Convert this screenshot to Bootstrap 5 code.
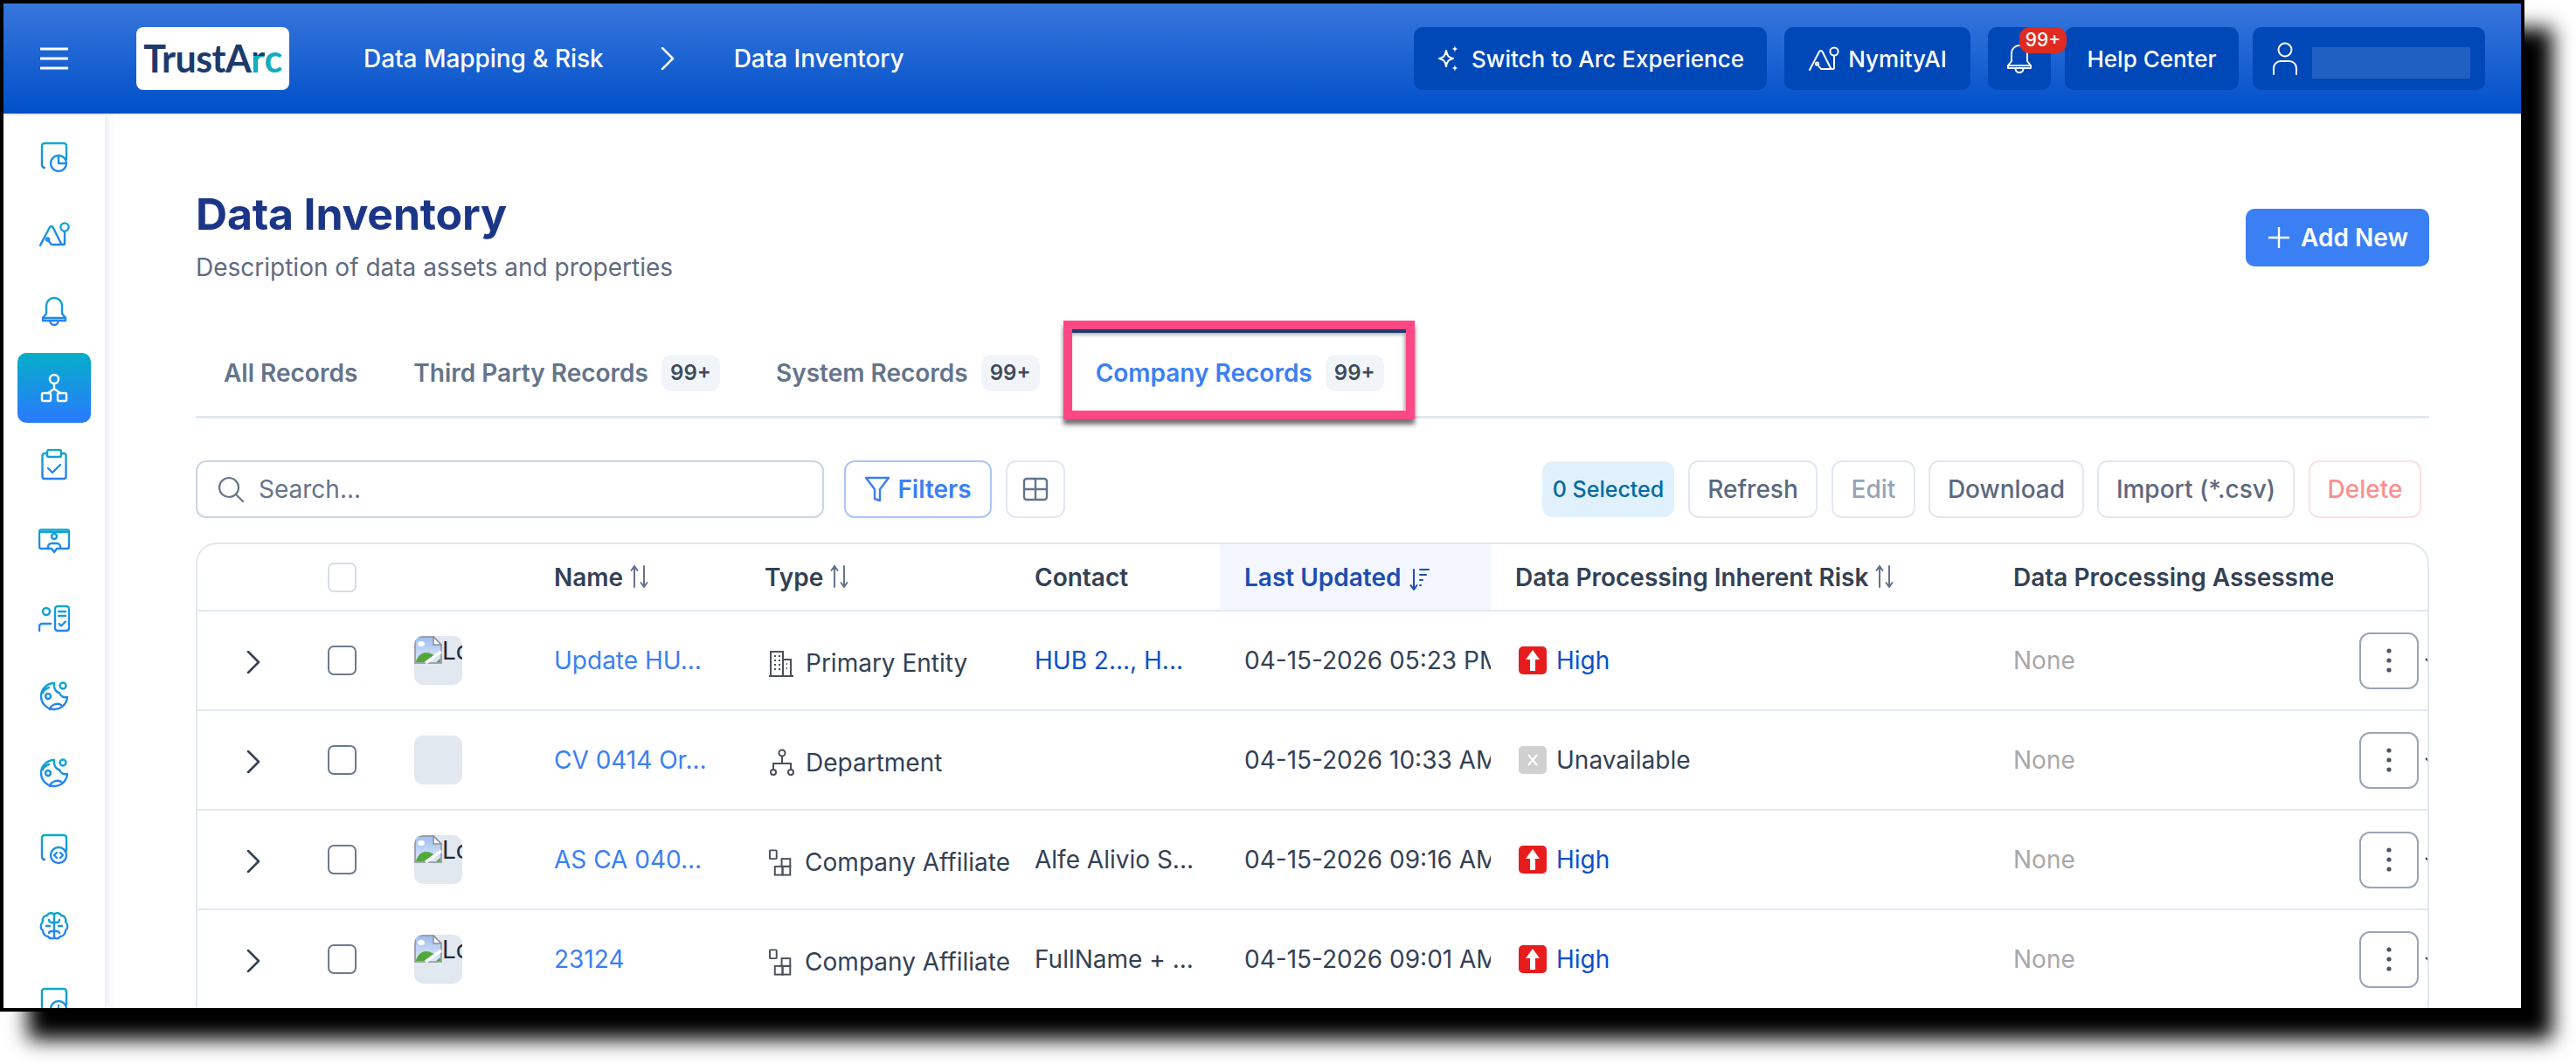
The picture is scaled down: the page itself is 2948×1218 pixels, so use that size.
<!DOCTYPE html>
<html lang="en">
<head>
    <meta charset="UTF-8">
    <meta name="viewport" content="width=device-width, initial-scale=1.0">
    <title>Data Inventory</title>
    <link href="https://cdn.jsdelivr.net/npm/bootstrap@5.3.0/dist/css/bootstrap.min.css" rel="stylesheet">
    <style>
        html, body { height: 100%; }
        body {
            background: #fff;
            overflow: hidden;
            font-family: "Inter", "Liberation Sans", sans-serif;
            font-size: 28px;
            color: #334155;
        }
        .app-frame {
            width: 2889px;
            height: 1158px;
            border: 4px solid #000;
            background: #fff;
            overflow: hidden;
            box-shadow: 32px 32px 22px #000;
        }
        .top-bar {
            height: 126px;
            flex: none;
            padding: 0 41px 0 42px;
            background: linear-gradient(180deg, #3876dc 0%, #0050c9 100%);
            color: #fff;
        }
        .logo-box {
            width: 175px;
            height: 72px;
            margin: 0 85px 0 78px;
            background: #fff;
            border-radius: 8px;
            font-family: "Lato", "Liberation Sans", sans-serif;
            font-size: 43px;
            font-weight: 700;
            letter-spacing: -.6px;
            color: #1c3a6b;
        }
        .logo-r {
            background: linear-gradient(180deg, #1c3a6b 46%, #12adc0 46%);
            -webkit-background-clip: text;
            background-clip: text;
            color: transparent;
        }
        .logo-c { color: #12adc0; }
        .crumb { font-weight: 500; font-size: 28px; letter-spacing: -.05px; color: #fff; }
        .crumb-sep { margin: 0 68px 0 65px; }
        .top-btn {
            height: 72px;
            background: #0047b8;
            color: #fff;
            border: 0;
            border-radius: 10px;
            font-size: 26px;
            font-weight: 500;
            padding: 0;
        }
        .top-btn:hover { background: #0047b8; color: #fff; }
        .btn-switch { width: 404px; gap: 12px; }
        .btn-nymity { width: 213px; margin-left: 20px; gap: 10px; }
        .btn-bell { width: 72px; margin-left: 20px; }
        .btn-help { width: 199px; margin-left: 16px; }
        .btn-user { width: 266px; margin-left: 16px; padding-left: 22px; gap: 16px; }
        .count-pill {
            top: 0;
            right: -18px;
            width: 54px;
            height: 30px;
            border-radius: 12px;
            background: #e02b20;
            color: #fff;
            font-size: 21px;
            line-height: 30px;
            font-weight: 500;
            text-align: center;
        }
        .user-mask { width: 181px; height: 36px; margin-top: 10px; background: #2060c2; }

        .side-rail {
            width: 116px;
            flex: none;
            padding-top: 8px;
            background: #fff;
            box-shadow: 4px 0 8px rgba(120, 130, 170, .16);
            z-index: 1;
        }
        .rail-item {
            width: 84px;
            height: 80px;
            margin: 0 0 8px 16px;
            border-radius: 10px;
            flex: none;
        }
        .rail-item svg { fill: none; stroke: url(#railGrad); stroke-width: 2.4; stroke-linecap: round; stroke-linejoin: round; }
        .rail-item.is-active { background: linear-gradient(180deg, #06aec8 0%, #2a7aff 100%); }
        .rail-item.is-active svg { stroke: #fff; }

        .page-top-gap { height: 2px; flex: none; background: #f0f0f0; }
        .content-row { min-height: 0; }
        .main-pane { padding: 83px 105px 0 104px; min-width: 0; flex: 1; }
        .page-title { font-size: 50px; line-height: 60px; font-weight: 700; color: #1c3687; margin: 0; letter-spacing: -.2px; }
        .page-sub { font-size: 28px; line-height: 40px; color: #5f6b82; margin: 11px 0 0; }
        .add-btn {
            width: 210px;
            height: 66px;
            margin-top: 24px;
            padding: 0;
            gap: 11px;
            background: #3b7ff5;
            border: 0;
            border-radius: 10px;
            color: #fff;
            font-size: 28px;
            font-weight: 600;
        }
        .add-btn:hover { background: #3b7ff5; color: #fff; }

        .record-tabs { margin-top: 51px; height: 102px; border-bottom: 3px solid #e2e8f0; }
        .record-tabs .nav-link {
            height: 99px;
            padding: 0 32px;
            display: flex;
            align-items: center;
            gap: 15px;
            font-weight: 600;
            color: #64748b;
            white-space: nowrap;
        }
        .record-tabs .tab-on .nav-link { color: #3b7ff5; }
        .tab-count {
            width: 67px;
            height: 42px;
            line-height: 42px;
            border-radius: 12px;
            background: #f1f5f9;
            color: #3f4a5c;
            font-size: 24px;
            text-align: center;
        }
        .tab-on { position: relative; }
        .tab-on::after {
            content: "";
            position: absolute;
            top: -10px;
            left: -5px;
            right: -3px;
            bottom: -4px;
            border: 10px solid #ff4785;
            box-shadow: 0 6px 5px rgba(0, 0, 0, .55), inset 0 4px 0 #1e3a6c, inset -2px 6px 4px rgba(0, 0, 0, .35);
            pointer-events: none;
        }

        .tool-row { margin-top: 48px; height: 66px; }
        .search-wrap { width: 719px; height: 66px; }
        .search-wrap svg { left: 24px; top: 17px; }
        .search-wrap .form-control {
            height: 66px;
            padding: 0 20px 0 70px;
            font-size: 28px;
            border: 2px solid #cbd5e1;
            border-radius: 12px;
            color: #334155;
        }
        .search-wrap .form-control::placeholder { color: #64748b; }
        .tool-btn {
            height: 66px;
            padding: 0;
            background: #fff;
            border: 2px solid #e2e8f0;
            border-radius: 12px;
            color: #5b6880;
            font-size: 28px;
            font-weight: 500;
        }
        .tool-btn:disabled { background: #fff; border-color: #e2e8f0; color: #94a3b8; opacity: 1; }
        .tool-filter { width: 169px; margin-left: 23px; border-color: #a9c6fb; color: #3b7ff5; font-weight: 600; }
        .tool-cols { width: 68px; margin-left: 16px; }
        .tool-group { gap: 16px; padding-right: 9px; }
        .sel-pill {
            width: 151px;
            height: 64px;
            line-height: 64px;
            background: #e0f1fd;
            color: #006a9e;
            border-radius: 12px;
            font-size: 25px;
            font-weight: 500;
            text-align: center;
        }
        .btn-refresh { width: 148px; }
        .btn-edit { width: 96px; }
        .btn-download { width: 178px; margin-left: -1px; }
        .btn-import { width: 226px; margin-left: -1px; }
        .btn-delete { width: 129px; }
        .tool-btn.is-danger:disabled { border-color: #fde0e0; color: #fb8f8f; }

        .inv-card {
            margin-top: 28px;
            border: 2px solid #e2e8f0;
            border-radius: 24px 24px 0 0;
            border-bottom: 0;
            overflow: hidden;
        }
        .inv-table { table-layout: fixed; width: 2552px; margin: 0; }
        .inv-table col:nth-child(1) { width: 124px; }
        .inv-table col:nth-child(2) { width: 100px; }
        .inv-table col:nth-child(3) { width: 156px; }
        .inv-table col:nth-child(4) { width: 241px; }
        .inv-table col:nth-child(5) { width: 309px; }
        .inv-table col:nth-child(6) { width: 240px; }
        .inv-table col:nth-child(7) { width: 310px; }
        .inv-table col:nth-child(8) { width: 570px; }
        .inv-table col:nth-child(9) { width: 394px; }
        .inv-table col:nth-child(10) { width: 108px; }
        .inv-table > :not(caption) > * > * {
            padding: 0 0 0 28px;
            border-bottom: 2px solid #e2e8f0;
            vertical-align: middle;
            white-space: nowrap;
            overflow: hidden;
            color: #334155;
            box-shadow: none;
        }
        .inv-table thead tr { height: 76px; }
        .inv-table tbody tr { height: 114px; }
        .inv-table th { font-weight: 600; }
        .inv-table .pad-chev { padding-left: 56px; }
        .inv-table .pad-check { padding-left: 25px; }
        .inv-table .pad-thumb { padding-left: 24px; }
        .inv-table .col-sorted { background: #f4f7ff; color: #1e4db0; }
        .inv-table td.col-date { font-weight: 400; padding-right: 0; }
        .inv-table .pad-act { padding-left: 30px; }
        .sort-ico { color: #64748b; margin: 0 0 5px 6px; }
        .row-check {
            width: 33px;
            height: 34px;
            margin: 0;
            display: block;
            border: 2px solid #6b7a90;
            border-radius: 8px;
        }
        th .row-check { border-color: #d5dce6; }
        .thumb-box {
            width: 55px;
            height: 56px;
            overflow: hidden;
            border-radius: 10px;
            background: #e2e8f0;
            font-size: 28px;
            line-height: 34px;
            color: #1e293b;
        }
        .inv-table a.rec-link { color: #3b7ff5; text-decoration: none; }
        .inv-table .deep-link { color: #0a50c8; text-decoration: none; }
        .inv-table .muted-none { color: #a8a8a8; }
        .type-cell { padding: 6px 0 0 4px; gap: 11px; }
        .risk-cell { padding-left: 4px; gap: 11px; }
        .risk-mark { width: 32px; height: 32px; border-radius: 5px; }
        .risk-high { background: #e81c1c; }
        .risk-none { background: #d0d0d0; }
        .act-wrap { gap: 7px; }
        .act-btn {
            width: 68px;
            height: 65px;
            padding: 0;
            background: #fff;
            border: 2px solid #9aa5b5;
            border-radius: 12px;
        }
        .line-ico { fill: none; stroke: currentColor; stroke-width: 2; stroke-linecap: round; stroke-linejoin: round; }
    </style>
</head>
<body>
    <!-- shared icon set -->
    <svg width="0" height="0" class="position-absolute">
        <defs>
            <linearGradient id="railGrad" gradientUnits="userSpaceOnUse" x1="0" y1="0" x2="0" y2="36">
                <stop offset="0" stop-color="#06aec8"/>
                <stop offset="1" stop-color="#2a7aff"/>
            </linearGradient>
            <linearGradient id="skyGrad" x1="0" y1="0" x2="0" y2="1">
                <stop offset="0" stop-color="#9fbdee"/>
                <stop offset="1" stop-color="#e0eafb"/>
            </linearGradient>
        </defs>
        <symbol id="i-docpie" viewBox="0 0 36 36"><path d="M7 30a3 3 0 0 1-3-3V5a3 3 0 0 1 3-3h22a3 3 0 0 1 3 3v15"/><circle cx="23" cy="25" r="9"/><path d="M23 17v8h8"/></symbol>
        <symbol id="i-nym" viewBox="0 0 36 36"><path d="M2 31 13 10a2 2 0 0 1 3.5 0L26 29a1 1 0 0 1-1 1H15l-4-5"/><circle cx="10.5" cy="24" r="1.6"/><path d="M27 30h2a1 1 0 0 0 1-1V15"/><circle cx="30" cy="10" r="4.6"/></symbol>
        <symbol id="i-bell" viewBox="0 0 36 36"><path d="M18 3a9 9 0 0 0-9 9v9l-4 5v3h26v-3l-4-5v-9a9 9 0 0 0-9-9z"/><path d="M5 26h26M13.5 29.5a4.5 4.5 0 0 0 9 0"/></symbol>
        <symbol id="i-tree" viewBox="0 0 36 36"><circle cx="18" cy="8" r="5"/><path d="M18 13v6l-7 5M18 19l7 5"/><rect x="4" y="24" width="10" height="9" rx="1.5"/><rect x="22" y="24" width="10" height="9" rx="1.5"/></symbol>
        <symbol id="i-clip" viewBox="0 0 36 36"><path d="M10 5H7a2.5 2.5 0 0 0-2.5 2.5v24A2.5 2.5 0 0 0 7 34h22a2.5 2.5 0 0 0 2.5-2.5v-24A2.5 2.5 0 0 0 29 5h-3"/><rect x="10" y="1" width="16" height="8" rx="2"/><path d="M11 22l5 5 9-9"/></symbol>
        <symbol id="i-screen" viewBox="0 0 36 36"><path d="M11 26H3a2 2 0 0 1-2-2V7h34v17a2 2 0 0 1-2 2h-8"/><path d="M1 7V6.5A2 2 0 0 1 3 4.5h30a2 2 0 0 1 2 2V7"/><circle cx="18" cy="12" r="3"/><path d="M11 26v-2a4 4 0 0 1 4-4h6a4 4 0 0 1 4 4v2h-4l-3 4-3-4z"/></symbol>
        <symbol id="i-persondoc" viewBox="0 0 36 36"><circle cx="9" cy="10" r="4"/><path d="M1 32v-5a3 3 0 0 1 3-3h10"/><rect x="19" y="4" width="16" height="28" rx="3"/><path d="M23 10h8M23 15h8M23.5 24l2.5 2.5 5-5"/></symbol>
        <symbol id="i-cookie" viewBox="0 0 36 36"><path d="M18 4A15 15 0 1 0 33 20c-4 1-8-1-9-5-4 0-7-6-6-11z"/><circle cx="28" cy="7" r="3.5"/><circle cx="11" cy="19" r="3"/><path d="M13 34c1-5 8-8 13-5M5 15c1-3 4-5 7-6"/></symbol>
        <symbol id="i-doccode" viewBox="0 0 36 36"><path d="M7 30a3 3 0 0 1-3-3V5a3 3 0 0 1 3-3h22a3 3 0 0 1 3 3v15"/><circle cx="23" cy="25" r="9"/><path d="M21 22l-3 3 3 3M25 22l3 3-3 3"/></symbol>
        <symbol id="i-brain" viewBox="0 0 36 36"><path d="M18 5v26M18 5c-2-3-7-2-8 1-4 0-6 4-5 7-3 3-3 8 0 10 0 4 3 7 6 7 2 3 6 3 7 1M18 5c2-3 7-2 8 1 4 0 6 4 5 7 3 3 3 8 0 10 0 4-3 7-6 7-2 3-6 3-7 1"/><path d="M18 14h-3a3 3 0 0 1-3-3M18 14h3a3 3 0 0 0 3-3M9 18h4M27 18h-4M18 24h-3a3 3 0 0 0-3 2M18 24h3a3 3 0 0 1 3 2"/></symbol>
        <symbol id="i-docinfo" viewBox="0 0 36 36"><path d="M7 30a3 3 0 0 1-3-3V5a3 3 0 0 1 3-3h22a3 3 0 0 1 3 3v15"/><circle cx="23" cy="25" r="9"/><path d="M23 21v.5M23 24v5"/></symbol>
        <symbol id="i-sort" viewBox="0 0 26 28"><path d="M7 26V2M7 2 3.500 7M7 2l3.500 5M18 2v24M18 26l-3.500-5M18 26l3.500-5"/></symbol>
    </svg>

    <div class="app-frame d-flex flex-column">
        <header class="top-bar d-flex align-items-center">
            <svg width="32" height="26" viewBox="0 0 32 26"><path d="M0 2h32M0 13h32M0 24h32" stroke="#fff" stroke-width="3"/></svg>
            <div class="logo-box d-flex align-items-center justify-content-center">TrustA<span class="logo-r">r</span><span class="logo-c">c</span></div>
            <span class="crumb">Data Mapping &amp; Risk</span>
            <svg width="16" height="26" viewBox="0 0 16 26" class="crumb-sep"><path d="M2 1l12 12L2 25" fill="none" stroke="#fff" stroke-width="2.5" stroke-linecap="round" stroke-linejoin="round"/></svg>
            <span class="crumb">Data Inventory</span>

            <div class="ms-auto d-flex align-items-center">
                <button class="btn top-btn btn-switch d-flex align-items-center justify-content-center">
                    <svg width="28" height="30" viewBox="0 0 28 30"><path d="M11 6c1 6 3 8 8 9-5 1-7 3-8 9-1-6-3-8-8-9 5-1 7-3 8-9z" fill="none" stroke="#fff" stroke-width="2.2" stroke-linejoin="round"/><path d="M21 0c.5 3 1 3.5 3.5 4-2.5.5-3 1-3.5 4-.5-3-1-3.500-3.500-4 2.500-.5 3-1 3.500-4zM21 22c.5 3 1 3.500 3.500 4-2.500.5-3 1-3.500 4-.5-3-1-3.500-3.500-4 2.500-.5 3-1 3.500-4z" fill="#fff"/></svg>
                    Switch to Arc Experience
                </button>
                <button class="btn top-btn btn-nymity d-flex align-items-center justify-content-center">
                    <svg width="36" height="36" viewBox="0 0 36 36" class="line-ico"><use href="#i-nym"/></svg>
                    NymityAI
                </button>
                <button class="btn top-btn btn-bell position-relative d-flex align-items-center justify-content-center">
                    <svg width="36" height="38" viewBox="0 0 36 36" class="line-ico"><use href="#i-bell"/></svg>
                    <span class="position-absolute count-pill">99+</span>
                </button>
                <button class="btn top-btn btn-help">Help Center</button>
                <button class="btn top-btn btn-user d-flex align-items-center">
                    <svg width="30" height="38" viewBox="0 0 30 38" class="line-ico"><circle cx="15" cy="9" r="7.5"/><path d="M2 37V30a8 8 0 0 1 8-8h10a8 8 0 0 1 8 8v7"/></svg>
                    <span class="user-mask"></span>
                </button>
            </div>
        </header>
        <div class="page-top-gap"></div>

        <div class="content-row d-flex flex-grow-1">
            <nav class="side-rail d-flex flex-column" id="rail"></nav>

            <main class="main-pane">
                <div class="d-flex justify-content-between align-items-start">
                    <div>
                        <h1 class="page-title">Data Inventory</h1>
                        <p class="page-sub">Description of data assets and properties</p>
                    </div>
                    <button class="btn add-btn d-flex align-items-center justify-content-center">
                        <svg width="28" height="28" viewBox="0 0 28 28"><path d="M14 2v24M2 14h24" stroke="#fff" stroke-width="2.4"/></svg>
                        Add New
                    </button>
                </div>

                <ul class="nav record-tabs">
                    <li class="nav-item"><a class="nav-link" href="#">All Records</a></li>
                    <li class="nav-item"><a class="nav-link" href="#">Third Party Records <span class="tab-count">99+</span></a></li>
                    <li class="nav-item"><a class="nav-link" href="#">System Records <span class="tab-count">99+</span></a></li>
                    <li class="nav-item tab-on"><a class="nav-link" href="#">Company Records <span class="tab-count">99+</span></a></li>
                </ul>

                <div class="tool-row d-flex align-items-center">
                    <div class="search-wrap position-relative">
                        <svg class="position-absolute" width="32" height="32" viewBox="0 0 32 32" fill="none" stroke="#64748b" stroke-width="2.2" stroke-linecap="round"><circle cx="14" cy="14" r="11"/><path d="M22 22l8 8"/></svg>
                        <input class="form-control" type="text" placeholder="Search...">
                    </div>
                    <button class="btn tool-btn tool-filter d-flex align-items-center justify-content-center gap-2">
                        <svg width="30" height="32" viewBox="0 0 30 32" fill="none" stroke="#3b7ff5" stroke-width="2.4" stroke-linejoin="round"><path d="M2 3h26L18 16v13l-6-2V16z"/></svg>
                        Filters
                    </button>
                    <button class="btn tool-btn tool-cols d-flex align-items-center justify-content-center">
                        <svg width="30" height="28" viewBox="0 0 30 28" fill="none" stroke="#64748b" stroke-width="2.4"><rect x="2" y="2" width="26" height="24" rx="3"/><path d="M15 2v24M2 14h26"/></svg>
                    </button>
                    <div class="tool-group ms-auto d-flex align-items-center">
                        <span class="sel-pill">0 Selected</span>
                        <button class="btn tool-btn btn-refresh">Refresh</button>
                        <button class="btn tool-btn btn-edit" disabled>Edit</button>
                        <button class="btn tool-btn btn-download">Download</button>
                        <button class="btn tool-btn btn-import">Import (*.csv)</button>
                        <button class="btn tool-btn btn-delete is-danger" disabled>Delete</button>
                    </div>
                </div>

                <div class="inv-card">
                    <table class="table inv-table">
                        <colgroup>
                            <col><col><col><col><col><col><col><col><col><col>
                        </colgroup>
                        <thead>
                            <tr>
                                <th></th>
                                <th class="pad-check"><input class="form-check-input row-check" type="checkbox"></th>
                                <th></th>
                                <th>Name<svg width="26" height="28" viewBox="0 0 26 28" class="line-ico sort-ico"><use href="#i-sort"/></svg></th>
                                <th>Type<svg width="26" height="28" viewBox="0 0 26 28" class="line-ico sort-ico"><use href="#i-sort"/></svg></th>
                                <th>Contact</th>
                                <th class="col-sorted">Last Updated <svg width="28" height="28" viewBox="0 0 28 28" class="line-ico"><path d="M7 26V3M7 26l-3.500-5M7 26l3.500-5M14 3h10M14 9h7M14 15h3M14 21h1"/></svg></th>
                                <th>Data Processing Inherent Risk<svg width="26" height="28" viewBox="0 0 26 28" class="line-ico sort-ico"><use href="#i-sort"/></svg></th>
                                <th class="pe-0">Data Processing Assessment</th>
                                <th></th>
                            </tr>
                        </thead>
                        <tbody id="rows"></tbody>
                    </table>
                </div>
            </main>
        </div>
    </div>

    <script>
        const railIcons = ['docpie', 'nym', 'bell', 'tree', 'clip', 'screen', 'persondoc', 'cookie', 'cookie', 'doccode', 'brain', 'docinfo'];

        document.getElementById('rail').innerHTML = railIcons.map((name, i) => `
            <div class="rail-item d-flex align-items-center justify-content-center ${i === 3 ? 'is-active' : ''}">
                <svg width="36" height="36" viewBox="0 0 36 36"><use href="#i-${name}"/></svg>
            </div>
        `).join('');

        const typeIcons = {
            'Primary Entity': '<path d="M3 31V3h14v28M17 12h9v19M1 31h28M7 8h2M12 8h2M7 13h2M12 13h2M7 18h2M12 18h2M7 23h2M12 23h2M21 17h1M21 22h1"/>',
            'Department': '<circle cx="16" cy="5" r="3.5"/><path d="M16 9v8M6 24v-7h20v7"/><circle cx="6" cy="27" r="3"/><circle cx="26" cy="27" r="3"/>',
            'Company Affiliate': '<rect x="2" y="2" width="8" height="10" rx="1"/><rect x="16" y="12" width="10" height="9"/><rect x="8" y="21" width="9" height="10"/><rect x="17" y="21" width="9" height="10"/>'
        };

        const records = [
            { name: 'Update HU...', logo: true, type: 'Primary Entity', contact: 'HUB 2..., H...', contactLink: true, date: '04-15-2026 05:23 PM', risk: 'High' },
            { name: 'CV 0414 Or...', logo: false, type: 'Department', contact: '', date: '04-15-2026 10:33 AM', risk: 'Unavailable' },
            { name: 'AS CA 040...', logo: true, type: 'Company Affiliate', contact: 'Alfe Alivio S...', date: '04-15-2026 09:16 AM', risk: 'High' },
            { name: '23124', logo: true, type: 'Company Affiliate', contact: 'FullName + ...', date: '04-15-2026 09:01 AM', risk: 'High' }
        ];

        // browser's broken image marker, the logos failed to load in the source page
        const brokenImg = `<svg width="32" height="32" viewBox="0 0 32 32" class="align-top"><path d="M1 1h21l9 9v21H1z" fill="url(#skyGrad)" stroke="#8a8f99" stroke-width="1.5"/><path d="M22 1v9h9z" fill="#fff" stroke="#8a8f99" stroke-width="1.5"/><ellipse cx="8" cy="9" rx="4" ry="3" fill="#fff"/><path d="M2 30c1-6 6-11 11-11 5 0 9 2 12 5l-8 6zM25 30l5-4v4z" fill="#53a83c"/><path d="M13 31l18-13" stroke="#fff" stroke-width="3.5"/></svg>`;

        document.getElementById('rows').innerHTML = records.map(r => `
            <tr>
                <td class="pad-chev"><svg width="16" height="26" viewBox="0 0 16 26"><path d="M2 1l12 12L2 25" fill="none" stroke="#334155" stroke-width="2.6" stroke-linecap="round" stroke-linejoin="round"/></svg></td>
                <td class="pad-check"><input class="form-check-input row-check" type="checkbox"></td>
                <td class="pad-thumb"><div class="thumb-box">${r.logo ? brokenImg + 'Logo' : ''}</div></td>
                <td><a class="rec-link" href="#">${r.name}</a></td>
                <td><div class="type-cell d-flex align-items-center"><svg width="32" height="32" viewBox="0 0 32 32" fill="none" stroke="#4a4f5a" stroke-width="2">${typeIcons[r.type]}</svg><span>${r.type}</span></div></td>
                <td>${r.contactLink ? `<a class="deep-link" href="#">${r.contact}</a>` : r.contact}</td>
                <td class="col-date">${r.date}</td>
                <td>
                    <div class="risk-cell d-flex align-items-center">
                        ${r.risk === 'High'
                            ? '<span class="risk-mark risk-high d-flex align-items-center justify-content-center"><svg width="20" height="26" viewBox="0 0 20 26"><path d="M10 1 18 12h-5v13H7V12H2z" fill="#fff"/></svg></span><a class="deep-link" href="#">High</a>'
                            : '<span class="risk-mark risk-none d-flex align-items-center justify-content-center"><svg width="16" height="18" viewBox="0 0 16 18"><path d="M3 3l10 12M13 3 3 15" stroke="#fff" stroke-width="2"/></svg></span><span>Unavailable</span>'}
                    </div>
                </td>
                <td><span class="muted-none">None</span></td>
                <td class="pad-act">
                    <div class="act-wrap d-flex align-items-center">
                        <button class="btn act-btn flex-shrink-0 d-flex align-items-center justify-content-center"><svg width="8" height="30" viewBox="0 0 8 30"><circle cx="4" cy="4" r="2.6" fill="#4a5568"/><circle cx="4" cy="15" r="2.6" fill="#4a5568"/><circle cx="4" cy="26" r="2.6" fill="#4a5568"/></svg></button>
                        <svg class="flex-shrink-0" width="10" height="8" viewBox="0 0 10 8"><path d="M1 2l4 4 4-4" fill="none" stroke="#334155" stroke-width="2"/></svg>
                    </div>
                </td>
            </tr>
        `).join('');
    </script>
    <script src="https://cdn.jsdelivr.net/npm/bootstrap@5.3.0/dist/js/bootstrap.bundle.min.js"></script>
</body>
</html>
